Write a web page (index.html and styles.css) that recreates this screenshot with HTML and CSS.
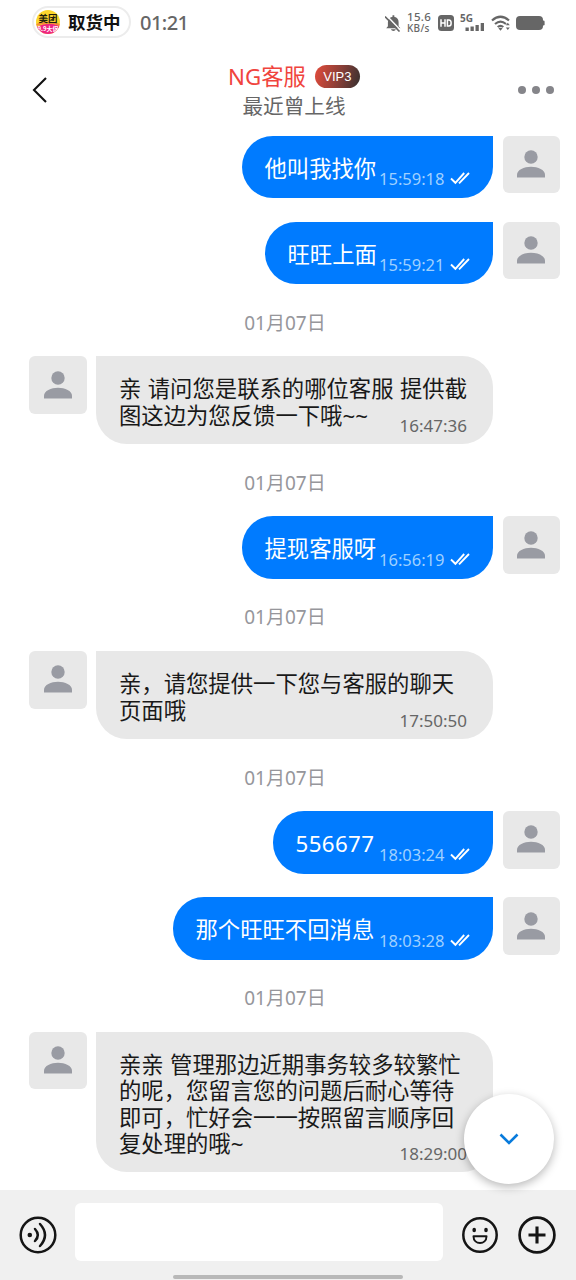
FILE: index.html
```html
<!DOCTYPE html>
<html lang="zh-CN">
<head>
<meta charset="utf-8">
<title>NG客服</title>
<link rel="stylesheet" href="styles.css">
</head>
<body>
<svg class="defs" aria-hidden="true">
  <symbol id="person" viewBox="0 0 28 28"><circle cx="14" cy="7" r="6.7"/><path d="M0 27.500v-2.700c0-4.900 7-8 14-8s14 3.100 14 8v2.700z"/></symbol>
  <symbol id="checks" viewBox="0 0 20 14"><path d="M1 7.500l4.400 4.300L14.200 2M9 12.300L19 2" fill="none" stroke="currentColor" stroke-width="1.900"/></symbol>
</svg>
<div class="screen">
  <div class="status">
    <div class="pill">
      <svg class="brand" viewBox="0 0 24 24">
        <defs><clipPath id="round"><circle cx="12" cy="12" r="12"/></clipPath></defs>
        <g clip-path="url(#round)"><rect width="24" height="24" fill="#fcd62d"/><path d="M0 17q12-6 24-1v8H0z" fill="#ee267f"/><path d="M0 15q12-5 24 0" fill="none" stroke="#f38b35" stroke-width="2"/>
        <text class="brand-name" x="12" y="12">美团</text><text class="brand-sale" x="12" y="21">9.9大促</text></g>
      </svg>
      <span>取货中</span>
    </div>
    <span class="clock">01:21</span>
    <div class="indicators">
      <svg class="bell" viewBox="0 0 16 18"><path d="M7.500 1.200h1.800v1.500c3 .6 4.300 2.800 4.300 5.500v4l1.800 2H1.200l1.700-2v-4c0-3 1.700-5 4.600-5.500zM6 15.200h4.800c-.5 2.300-4.200 2.300-4.800 0z"/><path d="M1.500 1.600l14 14.400" stroke="#fff" stroke-width="1.500"/><path d="M0 2.500l14.500 15" stroke="#666" stroke-width="1.600"/></svg>
      <div class="speed"><span>15.6</span><span>KB/s</span></div>
      <svg class="hd" viewBox="0 0 16 16"><rect width="16" height="16" rx="3.500"/><path d="M3 4.300v7.400M7 4.300v7.400M3 8h4M9.400 4.900h1.500c3 0 3 6.200 0 6.200H9.400z" fill="none" stroke="#fff" stroke-width="1.500"/></svg>
      <svg class="signal" viewBox="0 0 25 18"><text x="0" y="8">5G</text><path d="M5.500 13.500h3.300V17H5.500zM10.500 12.500h3.300V17h-3.300zM15.500 11h3.300v6h-3.300zM20.700 9H24v8h-3.300z"/></svg>
      <svg class="wifi" viewBox="0 0 20 16"><path d="M1 5.500q8.500-7.500 17 0M4 9q5.500-4.600 11 0M6.700 12q2.800-2.400 5.600 0" fill="none" stroke="#666" stroke-width="2.200"/><path d="M7.400 13.300q2.100-1.300 4.200 0L9.500 15.700zM16.800 7.700l2 2.500h-4zM16.800 15l2-2.600h-4z"/></svg>
      <svg class="battery" viewBox="0 0 29 14"><rect width="27" height="14" rx="4"/><path d="M26 4.500h1.300q1.300 0 1.300 1.300v2.400q0 1.300-1.300 1.300H26z"/></svg>
    </div>
  </div>
  <header class="header">
    <svg class="back" viewBox="0 0 16 28"><path d="M14 2L2 14l12 12" fill="none" stroke="#111" stroke-width="2.100"/></svg>
    <div class="contact">
      <div class="name-line"><span class="name">NG客服</span><span class="vip">VIP3</span></div>
      <div class="presence">最近曾上线</div>
    </div>
    <div class="more"><i></i><i></i><i></i></div>
  </header>
  <main class="chat">
    <div class="message sent"><div class="bubble w5"><p>他叫我找你</p><time>15:59:18</time><svg class="checks"><use href="#checks"/></svg></div><div class="avatar"><svg><use href="#person"/></svg></div></div>
    <div class="message sent follow"><div class="bubble w4"><p>旺旺上面</p><time>15:59:21</time><svg class="checks"><use href="#checks"/></svg></div><div class="avatar"><svg><use href="#person"/></svg></div></div>
    <div class="date">01月07日</div>
    <div class="message received two"><div class="avatar"><svg><use href="#person"/></svg></div><div class="bubble"><p>亲 请问您是联系的哪位客服 提供截<br>图这边为您反馈一下哦~~</p><time>16:47:36</time></div></div>
    <div class="date">01月07日</div>
    <div class="message sent"><div class="bubble w5"><p>提现客服呀</p><time>16:56:19</time><svg class="checks"><use href="#checks"/></svg></div><div class="avatar"><svg><use href="#person"/></svg></div></div>
    <div class="date">01月07日</div>
    <div class="message received two"><div class="avatar"><svg><use href="#person"/></svg></div><div class="bubble"><p>亲，请您提供一下您与客服的聊天<br>页面哦</p><time>17:50:50</time></div></div>
    <div class="date">01月07日</div>
    <div class="message sent"><div class="bubble wn"><p>556677</p><time>18:03:24</time><svg class="checks"><use href="#checks"/></svg></div><div class="avatar"><svg><use href="#person"/></svg></div></div>
    <div class="message sent follow"><div class="bubble w8"><p>那个旺旺不回消息</p><time>18:03:28</time><svg class="checks"><use href="#checks"/></svg></div><div class="avatar"><svg><use href="#person"/></svg></div></div>
    <div class="date">01月07日</div>
    <div class="message received four"><div class="avatar"><svg><use href="#person"/></svg></div><div class="bubble"><p>亲亲 管理那边近期事务较多较繁忙<br>的呢，您留言您的问题后耐心等待<br>即可，忙好会一一按照留言顺序回<br>复处理的哦~</p><time>18:29:00</time></div></div>
    <button class="scroll-down" aria-label="向下"><svg viewBox="0 0 20 12"><path d="M1.500 1.500L10 10l8.500-8.500" fill="none" stroke="#087bdc" stroke-width="2.600"/></svg></button>
  </main>
  <footer class="composer">
    <div class="controls">
      <svg class="voice" viewBox="0 0 38 38" fill="none" stroke="#151515" stroke-width="2.500"><circle cx="19" cy="19" r="17.300"/><circle cx="10.800" cy="19" r="2.300" fill="#151515" stroke="none"/><path d="M16 13q5.600 6 0 12M21 8q10 11 0 22" stroke-linecap="round"/></svg>
      <div class="field"></div>
      <svg class="smile" viewBox="0 0 36 36" fill="none" stroke="#151515" stroke-width="2.500"><circle cx="18" cy="18" r="16.700"/><path d="M11.500 19.300h13c0 9-13 9-13 0z" stroke-width="2" stroke-linejoin="round"/><ellipse cx="12.200" cy="13" rx="1.800" ry="2.200" fill="#151515" stroke="none"/><ellipse cx="24" cy="13" rx="1.800" ry="2.200" fill="#151515" stroke="none"/></svg>
      <svg class="plus" viewBox="0 0 38 38" fill="none" stroke="#151515" stroke-width="2.700"><circle cx="19" cy="19" r="17.400"/><path d="M10.500 19h17M19 10.500v17" stroke-width="3.100"/></svg>
    </div>
    <div class="home"></div>
  </footer>
</div>
</body>
</html>
```
FILE: styles.css
```css
* { box-sizing: border-box; }
body { margin: 0; background: #fff; font-family: "Noto Sans", "Noto Sans CJK SC", sans-serif; color: #191919; }
.defs { position: absolute; width: 0; height: 0; }
.screen { width: 576px; height: 1280px; display: flex; flex-direction: column; overflow: hidden; }

.status { height: 46px; padding: 6px 32px; display: flex; align-items: flex-start; color: #666; }
.pill { width: 99px; height: 32px; border: 2px solid #ececec; border-radius: 16px; display: flex; align-items: center; gap: 8px; padding-left: 2px; color: #111; font-size: 17.5px; line-height: 26px; font-weight: 700; white-space: nowrap; }
.brand { width: 24px; height: 24px; flex: none; }
.brand-name { font: 700 9.5px "Noto Sans CJK SC", sans-serif; text-anchor: middle; fill: #211d0c; }
.brand-sale { font: 700 6px "Noto Sans CJK SC", sans-serif; text-anchor: middle; fill: #fff; }
.clock { margin-left: 9px; font: 500 20px/33px "Noto Sans", sans-serif; letter-spacing: -.55px; }
.indicators { margin-left: auto; display: flex; align-items: center; height: 33px; fill: #666; }
.bell { width: 16px; height: 18px; margin-right: 6px; }
.speed { width: 25px; margin-right: 6px; display: flex; flex-direction: column; font: 500 10px/10.5px "Noto Sans", sans-serif; letter-spacing: .3px; }
.speed span:first-child { font-size: 11.5px; }
.hd { width: 16px; height: 16px; margin-right: 6px; }
.signal { width: 25px; height: 18px; margin-right: 6px; overflow: visible; }
.signal text { font: 700 10px "Noto Sans", sans-serif; }
.wifi { width: 20px; height: 16px; margin-right: 5px; }
.battery { width: 29px; height: 14px; margin-right: -1px; }

.header { height: 89.5px; padding: 0 22px 0 31px; display: grid; grid-template-columns: 50px 1fr 50px; }
.back { width: 16px; height: 28px; margin: 30px 0 0 1px; }
.contact { padding: 15px 0 0 3px; display: flex; flex-direction: column; align-items: center; }
.name-line { display: flex; align-items: center; gap: 9px; height: 31px; }
.name { color: #f0443d; font-size: 22.3px; line-height: 30px; }
.vip { width: 45px; height: 23px; border-radius: 12px; background: linear-gradient(105deg, #e34b3b, #873e37 55%, #35302f); color: #fff; font: 13px/23px "Liberation Sans", sans-serif; text-align: center; }
.presence { color: #666; font-size: 20.6px; line-height: 28px; }
.more { display: flex; gap: 6px; justify-content: flex-end; padding-top: 40px; }
.more i { width: 8px; height: 8px; border-radius: 50%; background: #85858a; }

.chat { height: 1054.5px; position: relative; display: flex; flex-direction: column; }
.message { display: flex; gap: 10px; height: 62.4px; flex: none; }
.follow { margin-top: 23.8px; }
.sent { justify-content: flex-end; padding-right: 16px; }
.received { padding-left: 29px; gap: 9.5px; }
.two { height: 88px; }
.four { height: 140px; }
.avatar { width: 57.5px; height: 57.5px; border-radius: 6px; background: #e8e8e8; color: #999ba3; display: grid; place-items: center; flex: none; }
.avatar svg { width: 28px; height: 28px; fill: currentColor; margin-top: -1px; }
.bubble { display: flex; white-space: nowrap; }
.bubble p { margin: 0; font-size: 22.35px; line-height: 26.3px; }
.sent .bubble { background: #007bff; color: #fff; border-radius: 31px 0 31px 31px; padding: 20px 23px 0; }
.sent time { margin-left: auto; padding-top: 13.4px; color: #9fd0ff; }
.bubble time { font-size: 16.5px; line-height: 20px; }
.checks { width: 20px; height: 14px; margin: 15.5px 0 0 5px; }
.w4 { width: 228px; }
.w5 { width: 251px; }
.w8 { width: 320px; }
.wn { width: 220px; }
.wn p { letter-spacing: .35px; }
.received .bubble { width: 397px; padding: 20.2px 26px 0 23px; background: #e8e8e8; border-radius: 0 31px 31px 31px; display: grid; }
.received p, .received time { grid-area: 1 / 1; }
.received p { word-spacing: .6px; }
.received time { align-self: end; justify-self: end; color: #666; padding-bottom: 8px; font-size: 17px; }
.date { height: 72.2px; flex: none; padding: 25.5px 6px 0 0; text-align: center; color: #96969b; font-size: 19px; line-height: 26px; }
.scroll-down { position: absolute; left: 464px; top: 958px; width: 90px; height: 90px; border: 0; border-radius: 50%; background: #fff; box-shadow: 0 3px 10px rgba(0,0,0,.28); display: grid; place-items: center; padding: 0; }
.scroll-down svg { width: 20px; height: 12px; }

.composer { height: 90px; flex: none; background: #f0f0f0; padding-top: 13px; display: flex; flex-direction: column; align-items: center; justify-content: space-between; }
.controls { width: 100%; display: flex; align-items: center; padding: 0 19px; height: 58px; }
.controls svg { flex: none; margin-top: 5px; }
.voice, .plus { width: 38px; height: 38px; }
.field { width: 368px; height: 58px; margin: 0 19px 0 18px; background: #fff; border-radius: 6px; flex: none; }
.smile { width: 36px; height: 36px; margin-right: 20px; }
.home { width: 230px; height: 4px; border-radius: 2px; background: #b8b8b8; margin-bottom: 1px; }
```
